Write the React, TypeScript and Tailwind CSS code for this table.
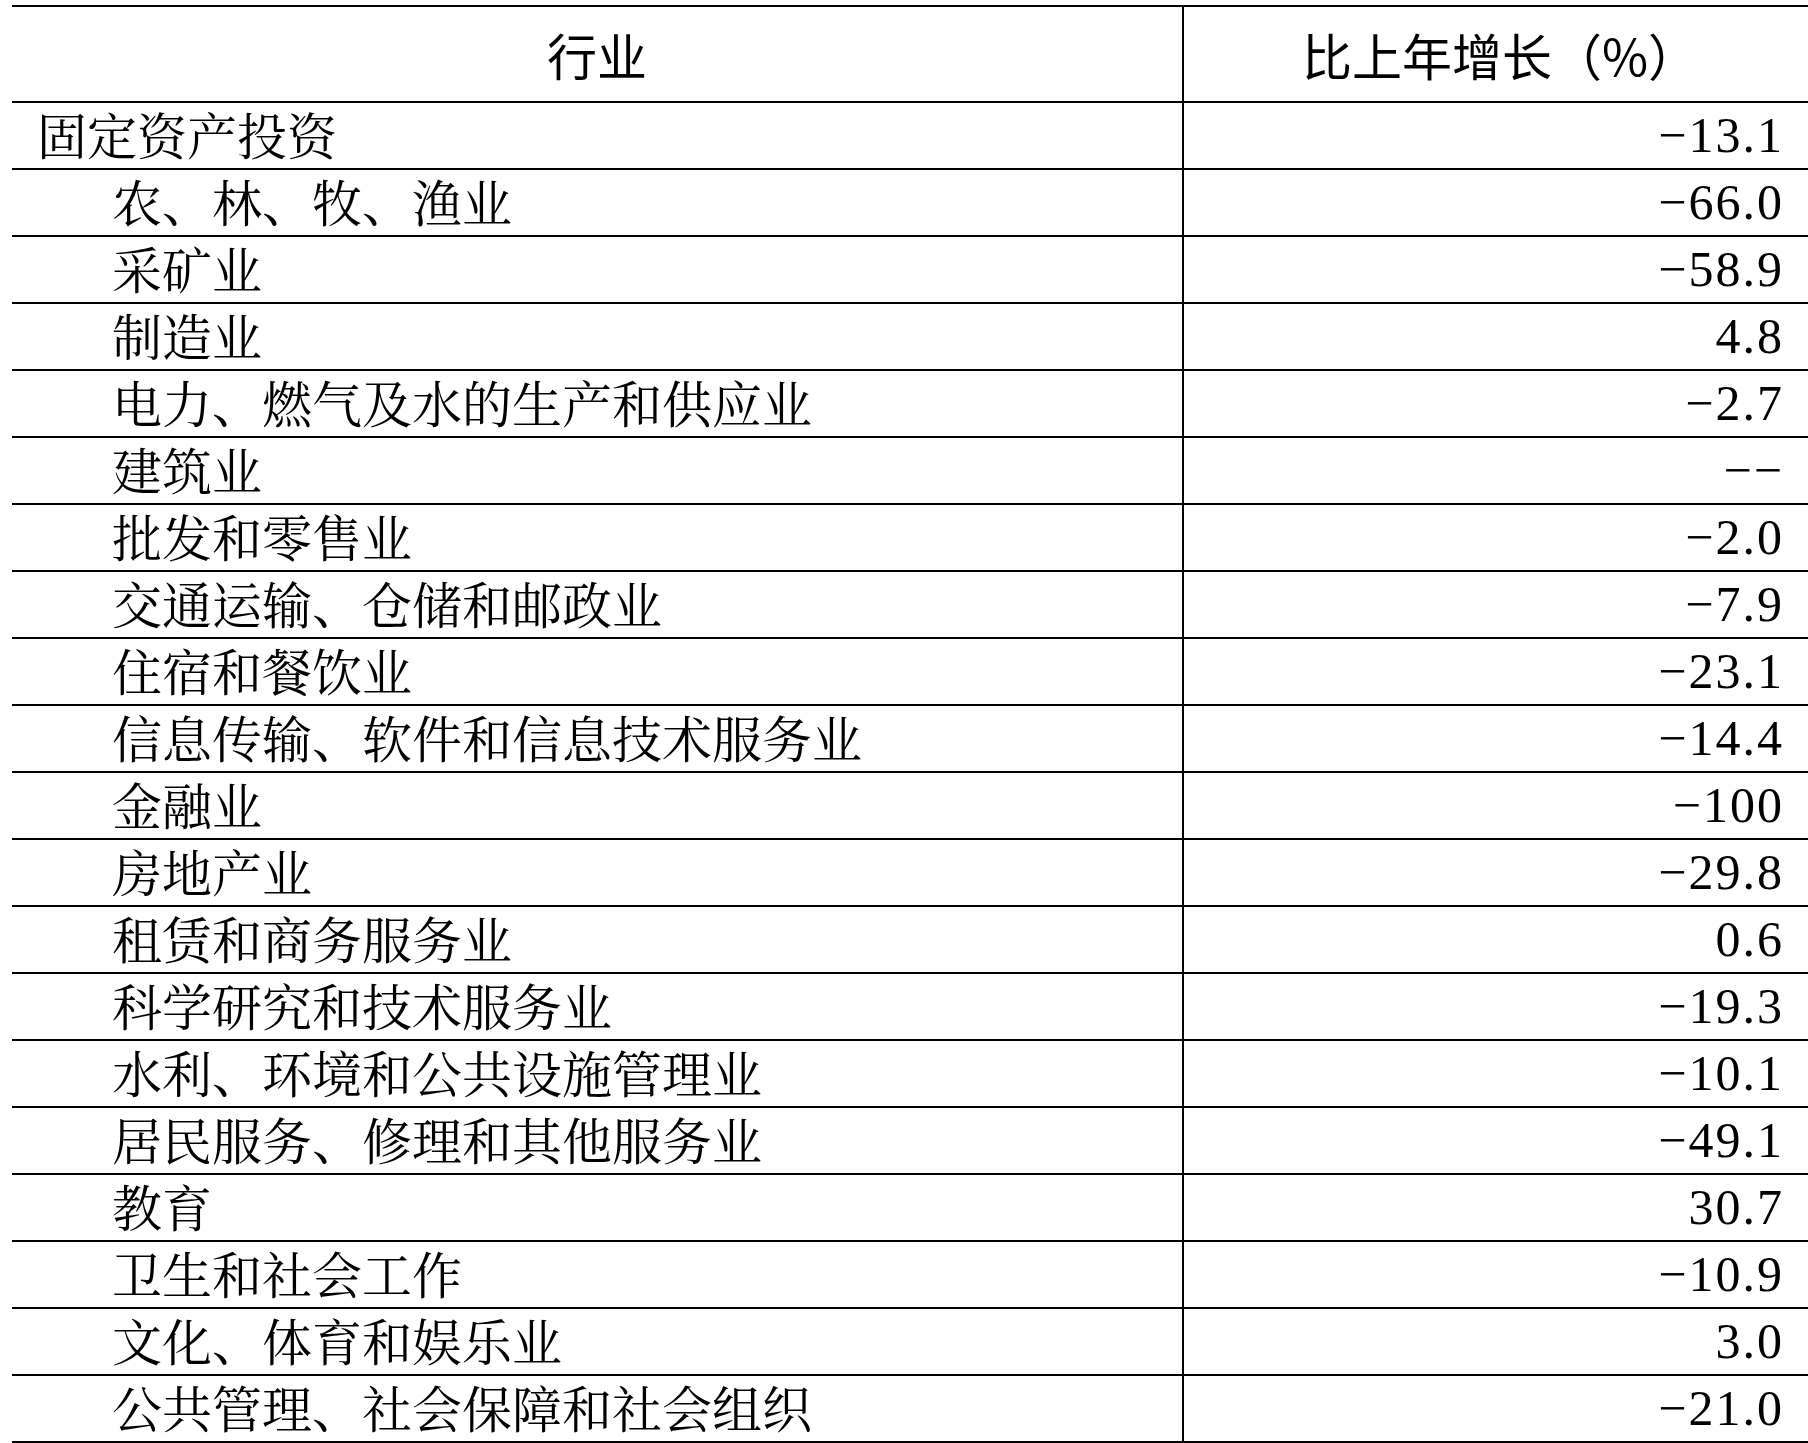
import { Fragment } from "react";

const rows: { name: string; value: string; sub: boolean }[] = [
  { name: "固定资产投资", value: "−13.1", sub: false },
  { name: "农、林、牧、渔业", value: "−66.0", sub: true },
  { name: "采矿业", value: "−58.9", sub: true },
  { name: "制造业", value: "4.8", sub: true },
  { name: "电力、燃气及水的生产和供应业", value: "−2.7", sub: true },
  { name: "建筑业", value: "−−", sub: true },
  { name: "批发和零售业", value: "−2.0", sub: true },
  { name: "交通运输、仓储和邮政业", value: "−7.9", sub: true },
  { name: "住宿和餐饮业", value: "−23.1", sub: true },
  { name: "信息传输、软件和信息技术服务业", value: "−14.4", sub: true },
  { name: "金融业", value: "−100", sub: true },
  { name: "房地产业", value: "−29.8", sub: true },
  { name: "租赁和商务服务业", value: "0.6", sub: true },
  { name: "科学研究和技术服务业", value: "−19.3", sub: true },
  { name: "水利、环境和公共设施管理业", value: "−10.1", sub: true },
  { name: "居民服务、修理和其他服务业", value: "−49.1", sub: true },
  { name: "教育", value: "30.7", sub: true },
  { name: "卫生和社会工作", value: "−10.9", sub: true },
  { name: "文化、体育和娱乐业", value: "3.0", sub: true },
  { name: "公共管理、社会保障和社会组织", value: "−21.0", sub: true },
];

export default function App() {
  return (
    <div className="w-[1808px] bg-white pl-[12px] pt-[5px] text-black">
      <div className="grid grid-cols-[1172px_1fr] border-t-2 border-black">
        {/* header */}
        <div className="flex h-[96px] items-center justify-center border-r-2 border-b-2 border-black font-['Noto_Sans_CJK_SC',sans-serif] text-[50px] leading-none">
          行业
        </div>
        <div className="flex h-[96px] items-center justify-center border-b-2 border-black pl-[8px] font-['Noto_Sans_CJK_SC',sans-serif] text-[50px] leading-none">
          比上年增长（%）
        </div>

        {rows.map((r) => (
          <Fragment key={r.name}>
            <div
              className={
                "flex h-[67px] items-center border-r-2 border-b-2 border-black pb-[6px] font-['Noto_Serif_CJK_SC','Noto_Sans_CJK_SC',serif] text-[50px] leading-none " +
                (r.sub ? "pl-[100px]" : "pl-[25px]")
              }
            >
              {r.name}
            </div>
            <div className="flex h-[67px] items-center justify-end border-b-2 border-black pr-[24px] pb-[2px] font-['Liberation_Serif',serif] text-[50px] leading-none tracking-[2px]">
              {r.value}
            </div>
          </Fragment>
        ))}
      </div>
    </div>
  );
}
